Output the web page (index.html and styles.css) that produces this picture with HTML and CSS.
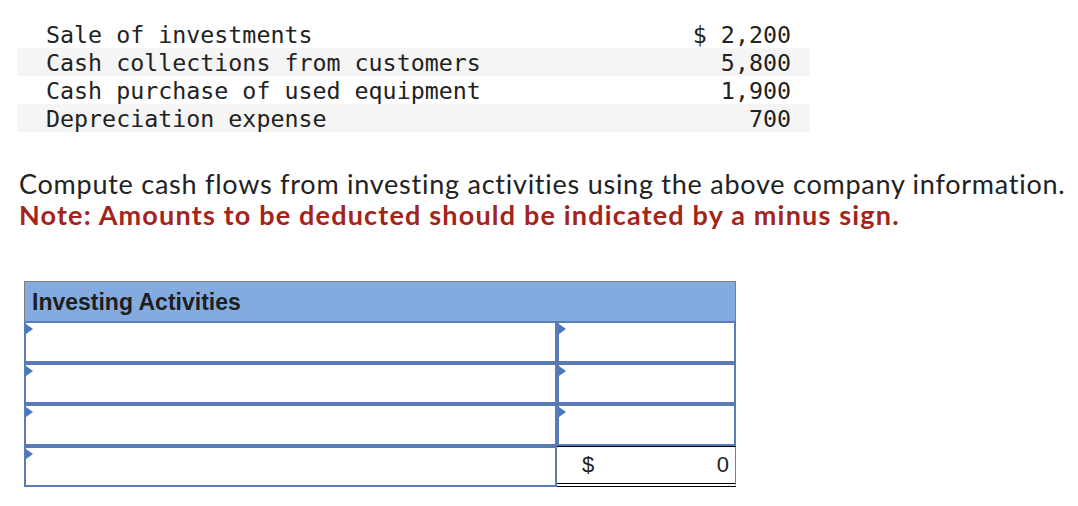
FILE: index.html
```html
<!DOCTYPE html>
<html>
<head>
<meta charset="utf-8">
<link rel="stylesheet" href="styles.css">
</head>
<body>
<div class="data">
  <div class="row"><span>Sale of investments</span><span>$ 2,200</span></div>
  <div class="row shade"><span>Cash collections from customers</span><span>5,800</span></div>
  <div class="row"><span>Cash purchase of used equipment</span><span>1,900</span></div>
  <div class="row shade"><span>Depreciation expense</span><span>700</span></div>
</div>
<div class="prompt">
  <p class="q">Compute cash flows from investing activities using the above company information.</p>
  <p class="note">Note: Amounts to be deducted should be indicated by a minus sign.</p>
</div>
<div class="sheet">
  <div class="head">Investing Activities</div>
  <div class="grid">
    <div class="cell in"></div><div class="cell in"></div>
    <div class="cell in"></div><div class="cell in"></div>
    <div class="cell in"></div><div class="cell in"></div>
    <div class="cell in"></div><div class="total"><span>$</span><span>0</span></div>
  </div>
</div>
</body>
</html>
```
FILE: styles.css
```css
html, body { margin: 0; padding: 0; background: #fff; }
body { width: 1078px; height: 506px; overflow: hidden; }

.data {
  margin: 20px 0 0 17px;
  width: 793px;
  font-family: "DejaVu Sans Mono", monospace;
  font-size: 23.3px;
  color: #222;
}
.row {
  height: 28px;
  display: flex;
  justify-content: space-between;
  align-items: center;
  padding: 0 19px 0 29px;
}
.shade { background: #f5f5f5; }

.prompt {
  margin: 36px 0 0 19px;
  font-family: "Lato", sans-serif;
  font-size: 27px;
}
.prompt p { margin: 0; line-height: 31px; white-space: nowrap; }
.q { color: #222; letter-spacing: 0.75px; }
.note { color: #a3241b; font-weight: bold; letter-spacing: 1.18px; }

.sheet {
  margin: 51px 0 0 24px;
  width: 712px;
  font-family: "Liberation Sans", Arial, sans-serif;
}
.head {
  height: 40px;
  box-sizing: border-box;
  background: #84abdf;
  border: 1px solid #808080;
  border-bottom: none;
  font-weight: bold;
  font-size: 23px;
  color: #1e1e1e;
  padding: 7px 0 0 7px;
  letter-spacing: 0;
}
.grid {
  display: grid;
  grid-template-columns: 533px 179px;
  grid-auto-rows: 41.5px;
}
.cell {
  position: relative;
  border: 2px solid #5a7bb3;
  background: #fff;
}
.in::before {
  content: "";
  position: absolute;
  left: 0;
  top: 1px;
  border-left: 7px solid #4a78c0;
  border-top: 5px solid transparent;
  border-bottom: 5px solid transparent;
}
.total {
  border-top: 1px solid #000;
  border-right: 1px solid #808080;
  border-bottom: 4px double #000;
  display: flex;
  justify-content: space-between;
  align-items: center;
  padding: 0 6px 0 25px;
  font-size: 22px;
  color: #222;
}
```
